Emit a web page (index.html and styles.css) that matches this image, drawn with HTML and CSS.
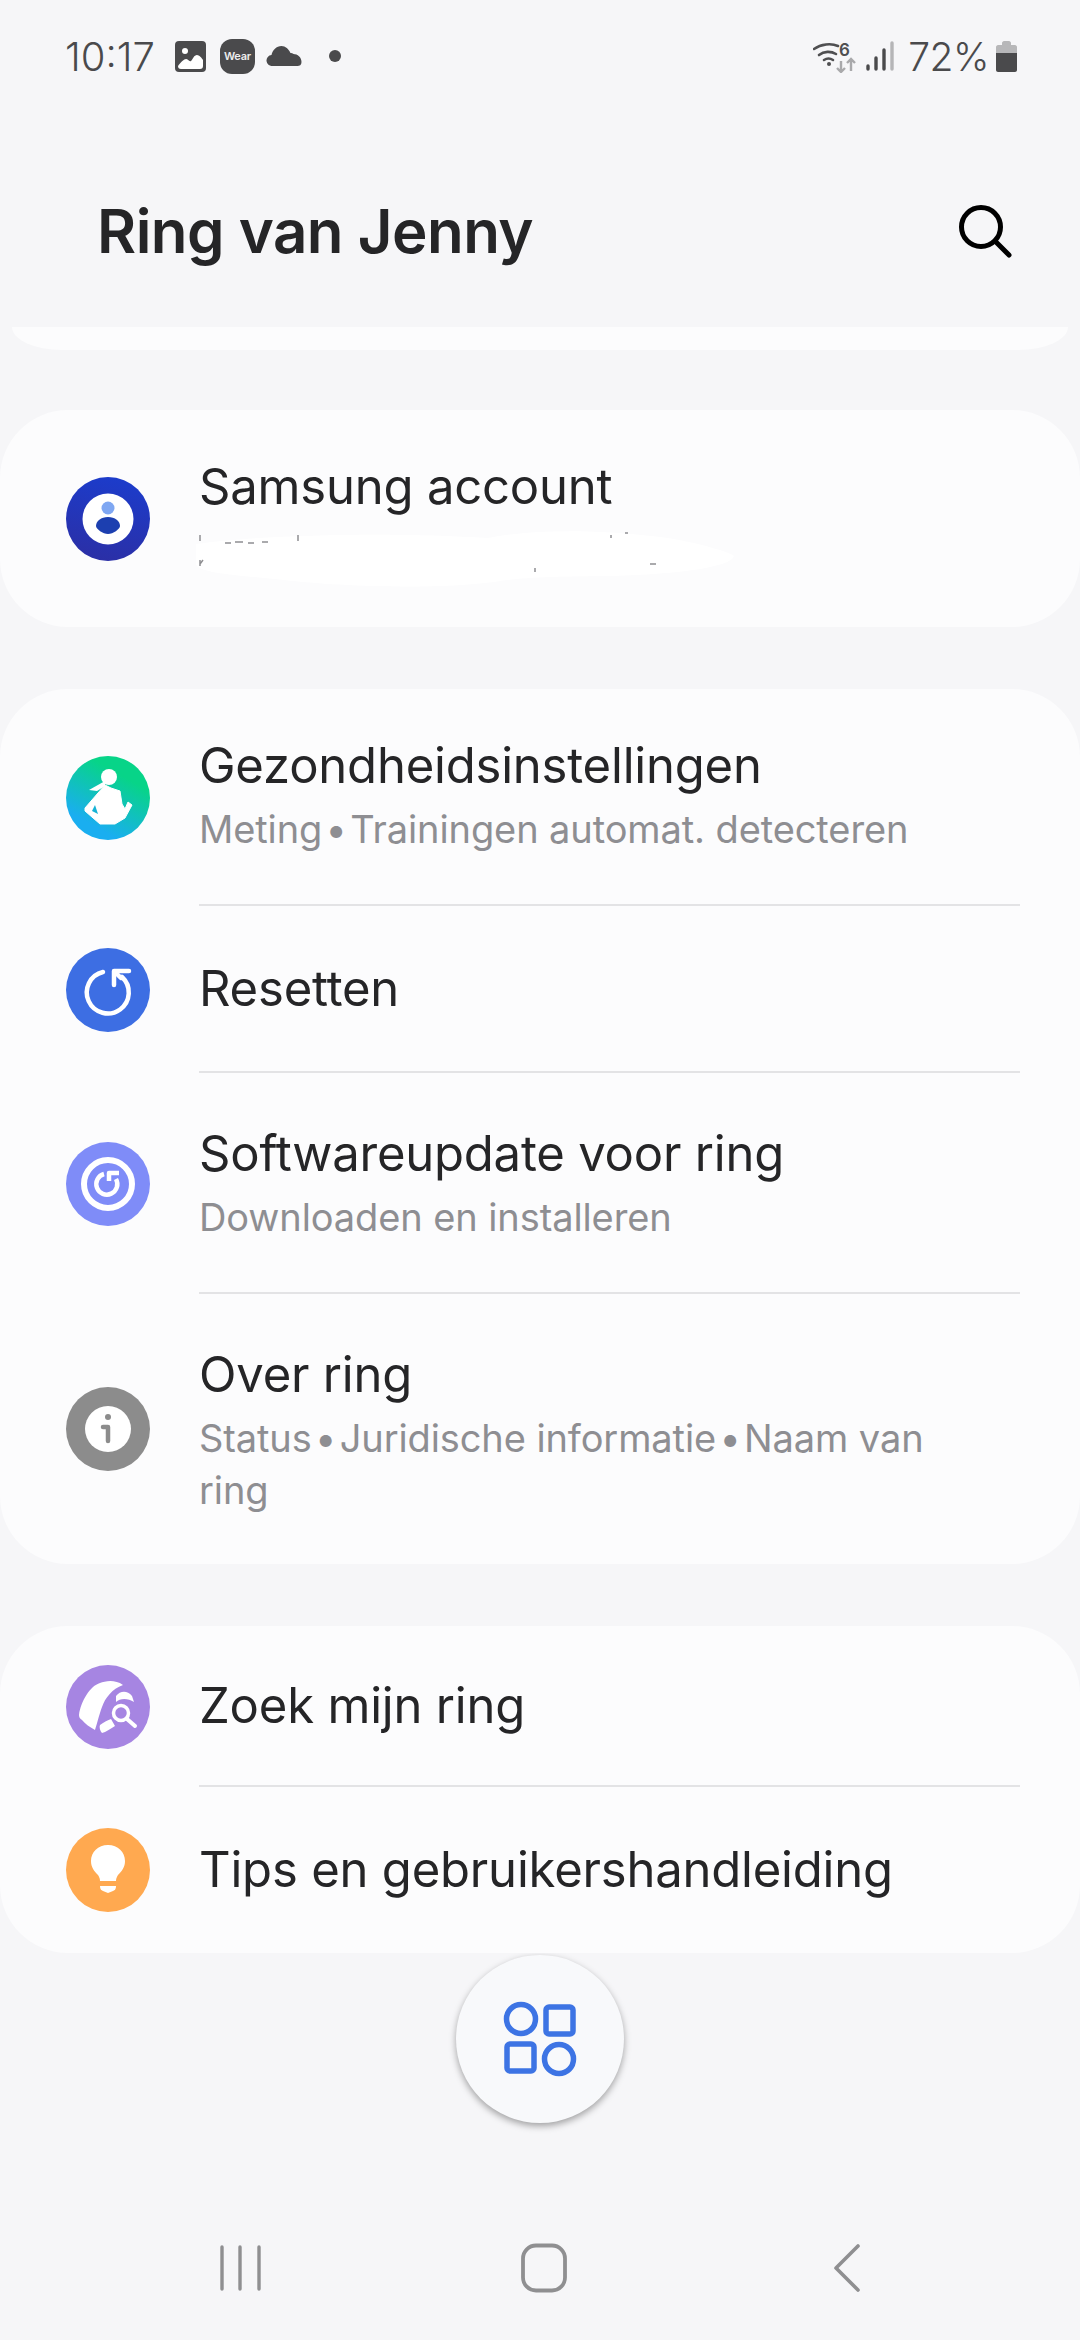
FILE: index.html
```html
<!DOCTYPE html>
<html lang="nl">
<head>
  <meta charset="UTF-8">
  <meta name="viewport" content="width=device-width,initial-scale=1.0">
  <title>Ring van Jenny</title>
  <link rel="stylesheet" href="styles.css">
</head>
<body>
  <div class="page">
    <!-- statusbalk -->
    <div class="status">
      <span class="time">10:17</span>
      <svg class="st-photo" width="31" height="31" viewBox="0 0 31 31">
        <rect width="31" height="31" rx="4" fill="#4a4a4c"/>
        <path d="M3 25c3-4 6-7 8-7 2 0 3 3 5 2 2-2 3-6 6-6 2 0 5 3 6 5v6c0 2-1 3-3 3H6c-2 0-3-1-3-3z" fill="#fff"/>
        <circle cx="10" cy="10" r="3" fill="#fff"/>
      </svg>
      <span class="st-wear">Wear</span>
      <svg class="st-cloud" width="36" height="20" viewBox="0 0 35 20">
        <path d="M6 20a5.500 5.500 0 0 1-1-11C6 4 10 0 15 0c4 0 7 3 9 7 1 0 2 0 3 1 4 0 8 3 8 8 0 3-2 4-4 4z" fill="#4a4a4c"/>
      </svg>
      <span class="st-dot"></span>
      <span class="st-space"></span>
      <svg class="st-wifi" width="44" height="33" viewBox="0 0 44 33">
        <g fill="none" stroke="#4f4f51" stroke-width="2.600" stroke-linecap="round">
          <path d="M1 9c7-5 17-6 24-3"/>
          <path d="M6 15c5-4 12-4 17-1"/>
          <path d="M11 20c3-2 6-2 9 0"/>
        </g>
        <circle cx="16" cy="24" r="2" fill="#4f4f51"/>
        <text x="26" y="16" class="st-six">6</text>
        <g fill="none" stroke="#a9a9ab" stroke-width="2.400">
          <path d="M28 21v11M24 28l4 4 4-4"/>
          <path d="M38 31V19M34 23l4-4 4 4"/>
        </g>
      </svg>
      <svg class="st-signal" width="28" height="30" viewBox="0 0 28 30">
        <g stroke-width="3.400" stroke-linecap="round">
          <path d="M2 28v-3M10 28V17M18 28V9" stroke="#4a4a4c"/>
          <path d="M26 28V2" stroke="#b5b5b7"/>
        </g>
      </svg>
      <span class="battery-text">72%</span>
      <svg class="st-battery" width="21" height="31" viewBox="0 0 21 31">
        <path d="M0 12V6c0-1 1-2 2-2h4V2c0-1 1-2 2-2h5c1 0 2 1 2 2v2h4c1 0 2 1 2 2v6z" fill="#b7b7b9"/>
        <path d="M0 12h21v17c0 1-1 2-2 2H2c-1 0-2-1-2-2z" fill="#4a4a4c"/>
      </svg>
    </div>

    <div class="header">
      <h1>Ring van Jenny</h1>
      <svg class="search" width="56" height="56" viewBox="0 0 56 56">
        <circle cx="24" cy="24" r="19.500" fill="none" stroke="#000" stroke-width="5"/>
        <path d="M38 38l14 14" stroke="#000" stroke-width="5" stroke-linecap="round"/>
      </svg>
    </div>

    <div class="card-end"></div>

    <!-- account -->
    <div class="card account">
      <div class="row">
        <div class="icon">
          <svg width="84" height="84" viewBox="0 0 84 84">
            <defs>
              <linearGradient id="acc" x1="0.600" y1="0" x2="0.400" y2="1">
                <stop offset="0" stop-color="#1c3ccb"/>
                <stop offset="1" stop-color="#2b2fa6"/>
              </linearGradient>
            </defs>
            <circle cx="42" cy="42" r="42" fill="url(#acc)"/>
            <circle cx="42" cy="42" r="25.500" fill="#fff"/>
            <ellipse cx="42" cy="31" rx="6.500" ry="6.500" fill="#7fa7f2"/>
            <path d="M42 40c7 0 12 4 12 9 0 3-7 8-12 8s-12-5-12-8c0-5 5-9 12-9z" fill="#1c3fb0"/>
          </svg>
        </div>
        <div class="body first">
          <div class="name">Samsung account</div>
          <div class="sub">&nbsp;</div>
        </div>
      </div>
      <svg class="redact" width="560" height="70" viewBox="0 0 560 70">
        <path d="M8 16C80 6 210 4 300 10 350 0 420 2 480 10c30 5 62 14 66 18-4 12-60 18-120 20-60 0-100 2-120 6-60 8-160 4-210-2C60 48 10 46 8 36z" fill="#fff"/>
        <g stroke="#8f8f92" stroke-width="1.500" fill="none">
          <path d="M12 7v6M37 15h6M47 14h8M60 15h6M74 14h6M110 7v6M423 7v3M437 5h3M12 32v6M15 32l-3 4M347 40v4M462 36h6"/>
        </g>
      </svg>
    </div>

    <div class="card">
      <div class="row">
        <div class="icon">
          <svg width="84" height="84" viewBox="0 0 84 84">
            <defs>
              <linearGradient id="health" x1="0.800" y1="0.150" x2="0.350" y2="0.950">
                <stop offset="0.150" stop-color="#07d488"/>
                <stop offset="0.900" stop-color="#1aaef0"/>
              </linearGradient>
            </defs>
            <circle cx="42" cy="42" r="42" fill="url(#health)"/>
            <circle cx="43" cy="21" r="8" fill="#fff"/>
            <path d="M39 25L23 34l8 1 8-5z" fill="#fff"/>
            <path d="M39 29l6 3 9 3 2 13 3 5 3-7 4 3-7 13-10 6H34L19 55v-3l13-15z" fill="#fff" stroke="#fff" stroke-width="1" stroke-linejoin="round"/>
            <path d="M29 49l3 9-6-3z" fill="#17b3d6"/>
          </svg>
        </div>
        <div class="body first line">
          <div class="name">Gezondheidsinstellingen</div>
          <div class="sub">Meting&hairsp;•&hairsp;Trainingen automat. detecteren</div>
        </div>
      </div>
      <div class="row">
        <div class="icon">
          <svg width="84" height="84" viewBox="0 0 84 84">
            <circle cx="42" cy="42" r="42" fill="#3d6ee3"/>
            <g fill="none" stroke="#fff" stroke-width="4.500" stroke-linecap="round" stroke-linejoin="round">
              <path d="M37 24A21 21 0 1 0 56 29"/>
              <path d="M48 37V23h15"/>
              <path d="M49 24l6 6"/>
            </g>
          </svg>
        </div>
        <div class="body single line">
          <div class="name">Resetten</div>
        </div>
      </div>
      <div class="row">
        <div class="icon">
          <svg width="84" height="84" viewBox="0 0 84 84">
            <circle cx="42" cy="42" r="42" fill="#7f8cf8"/>
            <circle cx="42" cy="42" r="24" fill="none" stroke="#fff" stroke-width="6"/>
            <g fill="none" stroke="#fff" stroke-width="4.500" stroke-linejoin="round">
              <path d="M38 32A10.500 10.500 0 1 0 50 37"/>
              <path d="M43 39V31h10"/>
            </g>
          </svg>
        </div>
        <div class="body line">
          <div class="name">Softwareupdate voor ring</div>
          <div class="sub">Downloaden en installeren</div>
        </div>
      </div>
      <div class="row">
        <div class="icon">
          <svg width="84" height="84" viewBox="0 0 84 84">
            <circle cx="42" cy="42" r="42" fill="#8c8c8c"/>
            <circle cx="42" cy="42" r="23" fill="#fff"/>
            <circle cx="42" cy="30" r="3" fill="#8c8c8c"/>
            <path d="M37 40h5v14" fill="none" stroke="#8c8c8c" stroke-width="4.500" stroke-linecap="round" stroke-linejoin="round"/>
          </svg>
        </div>
        <div class="body last">
          <div class="name">Over ring</div>
          <div class="sub">Status&hairsp;•&hairsp;Juridische informatie&hairsp;•&hairsp;Naam van ring</div>
        </div>
      </div>
    </div>

    <div class="card">
      <div class="row">
        <div class="icon">
          <svg width="84" height="84" viewBox="0 0 84 84">
            <circle cx="42" cy="42" r="42" fill="#a685e2"/>
            <path d="M13 50C15 36 24 21 34 18c5-2 15-4 23 2C46 24 39 33 36 42c-3 8-5 17-7 23-5-3-10-6-13-10-2-1-3-3-3-5z" fill="#fff"/>
            <path d="M50 31c4-5 11-6 16 0l2 6c-6-4-14-4-18 0z" fill="#fff"/>
            <path d="M34 60c4-3 8-5 11-6l4 7c-5 3-9 6-13 7-2-2-3-6-2-8z" fill="#fff"/>
            <circle cx="55" cy="48" r="7.500" fill="#a685e2" stroke="#fff" stroke-width="3.500"/>
            <path d="M61 54l8 7" stroke="#fff" stroke-width="4" stroke-linecap="round"/>
          </svg>
        </div>
        <div class="body compact line">
          <div class="name">Zoek mijn ring</div>
        </div>
      </div>
      <div class="row">
        <div class="icon">
          <svg width="84" height="84" viewBox="0 0 84 84">
            <circle cx="42" cy="42" r="42" fill="#ffa950"/>
            <path d="M42 17c10 0 17 7 17 16 0 6-3 10-7 14-1 2-2 3-2 6H34c0-3-1-4-2-6-4-4-7-8-7-14 0-9 7-16 17-16z" fill="#fff"/>
            <path d="M34 58h16c0 3-1 4-3 5l-5 2-5-2c-2-1-3-2-3-5z" fill="#fff"/>
          </svg>
        </div>
        <div class="body single">
          <div class="name">Tips en gebruikershandleiding</div>
        </div>
      </div>
    </div>

    <button class="fab">
      <svg width="80" height="80" viewBox="0 0 80 80">
        <g fill="none" stroke="#3d74e4" stroke-width="5.500">
          <circle cx="21" cy="20" r="14.500"/>
          <rect x="46" y="8" width="27" height="27" rx="3"/>
          <rect x="7" y="45" width="27" height="27" rx="3"/>
          <circle cx="59" cy="60" r="14.500"/>
        </g>
      </svg>
    </button>

    <!-- navigatiebalk -->
    <div class="nav">
      <svg width="41" height="48" viewBox="0 0 41 48">
        <path d="M2 3v42M20 3v42M39 3v42" stroke="#8f8f91" stroke-width="3.400" stroke-linecap="round"/>
      </svg>
      <svg class="home" width="46" height="50" viewBox="0 0 46 50">
        <rect x="2" y="2.500" width="42" height="45" rx="13" fill="none" stroke="#8f8f91" stroke-width="3.800"/>
      </svg>
      <svg width="27" height="50" viewBox="0 0 27 50">
        <path d="M25 3L3 25l22 22" fill="none" stroke="#8f8f91" stroke-width="3.600" stroke-linecap="round" stroke-linejoin="round"/>
      </svg>
    </div>
  </div>
</body>
</html>
```

FILE: styles.css
```css
/* algemeen */
body {
  margin: 0;
  padding: 0;
}
.page {
  width: 1080px;
  height: 2340px;
  overflow: hidden;
  background-color: #f6f6f8;
  font-family: Inter, "Noto Sans", sans-serif;
  color: #252527;
}

/* statusbalk */
.status {
  display: flex;
  align-items: center;
  height: 112px;
  padding: 0 63px 0 65px;
  color: #4a4a4c;
}
.time {
  font-size: 40px;
  font-weight: 300;
  margin-right: 20px;
}
.st-wear {
  width: 35px;
  height: 35px;
  margin-left: 14px;
  border-radius: 12px;
  background-color: #4a4a4c;
  color: #eee;
  font-size: 11px;
  font-weight: 600;
  line-height: 35px;
  text-align: center;
  letter-spacing: -0.3px;
}
.st-cloud {
  margin-left: 11px;
}
.st-dot {
  width: 12px;
  height: 12px;
  margin-left: 27px;
  border-radius: 50%;
  background-color: #4a4a4c;
}
.st-space {
  flex: 1;
}
.st-six {
  font-size: 17px;
  font-weight: 600;
  fill: #4f4f51;
}
.st-signal {
  margin-left: 9px;
}
.battery-text {
  margin-left: 14px;
  font-size: 39px;
  font-weight: 300;
  letter-spacing: -0.5px;
}
.st-battery {
  margin-left: 7px;
}

/* kop */
.header {
  display: flex;
  justify-content: space-between;
  align-items: center;
  height: 215px;
  padding: 0 67px 0 97px;
}
h1 {
  margin: 0;
  padding-top: 22px;
  font-size: 60px;
  font-weight: 600;
  letter-spacing: -0.5px;
}
.search {
  margin-top: 23px;
}

/* kaarten */
.card-end {
  height: 23px;
  margin: 0 12px 60px;
  background-color: #fcfcfd;
  border-radius: 0 0 50px 50px / 0 0 23px 23px;
}
.card {
  position: relative;
  margin-bottom: 62px;
  background-color: #fcfcfd;
  border-radius: 68px;
}
.row {
  display: flex;
  align-items: center;
  padding-left: 66px;
}
.icon {
  flex: none;
  width: 84px;
  height: 84px;
  margin-right: 49px;
}
.icon svg {
  display: block;
}
.body {
  flex: 1;
  margin-right: 60px;
  padding: 51px 0;
}
.body.first {
  padding-top: 47px;
}
.body.last {
  padding-bottom: 48px;
}
.body.single {
  padding: 53px 0;
}
.body.compact {
  padding-top: 50px;
}
.body.line {
  padding-bottom: 49px;
  border-bottom: 2px solid #e3e3e5;
}
.body.single.line {
  padding-bottom: 52px;
}
.name {
  font-size: 49px;
  line-height: 60px;
  letter-spacing: -0.2px;
}
.sub {
  max-width: 770px;
  margin-top: 7px;
  font-size: 38px;
  line-height: 52px;
  letter-spacing: -0.1px;
  color: #8e8e92;
}

/* wit gemaakt e-mailadres */
.redact {
  position: absolute;
  left: 188px;
  top: 118px;
}

/* knop */
.fab {
  display: block;
  width: 168px;
  height: 168px;
  margin: -60px auto 0;
  padding: 0;
  border: none;
  border-radius: 50%;
  background-color: #f8f9fb;
  box-shadow: 0 3px 7px rgba(0, 0, 0, 0.35);
}
.fab svg {
  display: block;
  margin: 0 auto;
}

/* navigatiebalk */
.nav {
  display: flex;
  justify-content: space-between;
  align-items: center;
  height: 50px;
  margin-top: 120px;
  padding: 0 220px;
}
.home {
  margin-right: 6px;
}
```
